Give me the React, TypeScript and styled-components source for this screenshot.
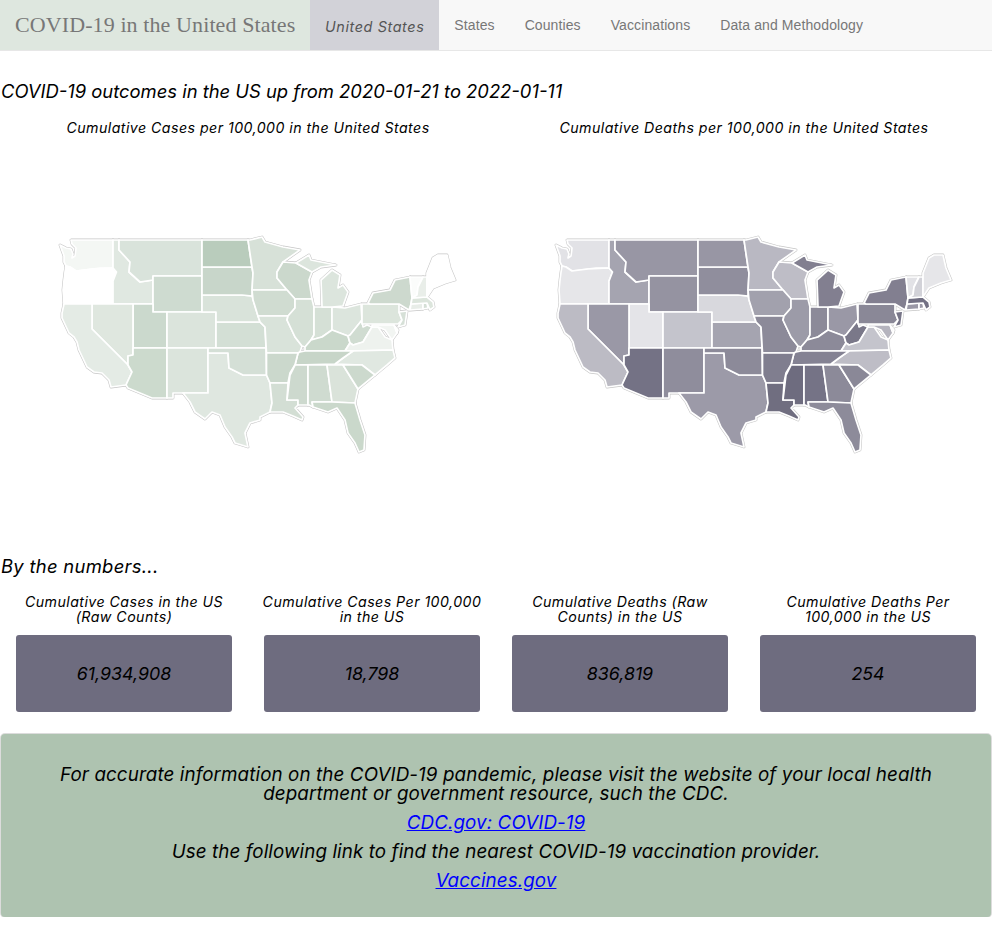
import * as React from 'react'
import styled, { createGlobalStyle } from 'styled-components'

const GlobalStyle = createGlobalStyle`
  html, body {
    margin: 0;
    padding: 0;
    background: #fff;
  }
  body {
    font-family: "Inter", "Liberation Sans", sans-serif;
    color: #000;
  }
`

const Nav = styled.nav`
  display: flex;
  align-items: stretch;
  height: 50px;
  background: #f8f8f8;
  border-bottom: 1px solid #e7e7e7;
`

const Brand = styled.div`
  width: 280px;
  padding: 0 15px;
  display: flex;
  align-items: center;
  background: #dee7df;
  color: #777;
  font-family: "Liberation Serif", serif;
  font-size: 22px;
  letter-spacing: 0.1px;
  white-space: nowrap;
`

const NavItem = styled.a<{ $active?: boolean }>`
  display: flex;
  align-items: center;
  padding: 0 15px;
  white-space: nowrap;
  font-size: ${(p) => (p.$active ? '14.4px' : '14px')};
  letter-spacing: ${(p) => (p.$active ? '0.6px' : '0.1px')};
  color: ${(p) => (p.$active ? '#555' : '#777')};
  background: ${(p) => (p.$active ? '#d2d2d8' : 'transparent')};
  font-family: ${(p) => (p.$active ? '"Inter", sans-serif' : '"Liberation Sans", sans-serif')};
  font-style: ${(p) => (p.$active ? 'italic' : 'normal')};
  padding-top: ${(p) => (p.$active ? '2px' : '0')};
`

const Heading = styled.h3`
  margin: 29px 0 0;
  padding-left: 1px;
  height: 22px;
  line-height: 22px;
  font-size: 18.4px;
  font-weight: 400;
  font-style: italic;
  white-space: nowrap;
`

const MapGrid = styled.div`
  display: grid;
  grid-template-columns: 1fr 1fr;
  margin-top: 16px;
`

const MapPanel = styled.div`
  display: flex;
  flex-direction: column;
  align-items: center;
`

const MapTitle = styled.div`
  height: 20px;
  line-height: 20px;
  font-size: 14.2px;
  letter-spacing: 0.45px;
  font-style: italic;
  white-space: nowrap;
`

const MapSvg = styled.svg`
  display: block;
  width: 496px;
  height: 417px;
`

const SubHeading = styled(Heading)`
  margin-top: 0;
  letter-spacing: 0.3px;
`

const StatGrid = styled.div`
  display: grid;
  grid-template-columns: repeat(4, 1fr);
  margin-top: 17px;
`

const Stat = styled.div`
  padding: 0 16px;
  display: flex;
  flex-direction: column;
`

const StatLabel = styled.div`
  height: 30px;
  margin: 0 -2px 11px;
  line-height: 15px;
  text-align: center;
  font-size: 14.2px;
  letter-spacing: 0.45px;
  font-style: italic;
`

const StatValue = styled.div`
  height: 77px;
  display: flex;
  align-items: center;
  justify-content: center;
  background: #6e6c7f;
  border-radius: 3px;
  font-size: 17.8px;
  font-style: italic;
`

const Notice = styled.div`
  margin: 22px 0 0 1px;
  width: 990px;
  height: 183px;
  box-sizing: border-box;
  padding: 31px 40px 0;
  background: #aec3b0;
  border-radius: 4px;
  box-shadow: 0 0 0 1px #dcdcdc;
  text-align: center;
  font-size: 18.8px;
  letter-spacing: 0.1px;
  font-style: italic;
  line-height: 19px;
`

const NoticeLine = styled.div`
  margin-top: 10px;
`

const NoticeLink = styled.a`
  color: #00f;
  text-decoration: underline;
`

type StateShape = { id: string; d: string; cases: string; deaths: string }

// outlines traced by eye, in page pixels of the left map
const STATES: StateShape[] = [
  { id: 'WA', cases: '#f4f7f4', deaths: '#e2e2e6', d: 'M60,245L66,248L71,249L73,254L72,258L75,256L76,248L72,244L71,240L113,240L113,268L100,268L92,269L76,271L70,267L66,266L64,262L64,256Z' },
  { id: 'OR', cases: '#ffffff', deaths: '#e6e6e9', d: 'M66,266L70,267L76,271L92,269L113,268L116.5,272L113,281L113,304L64,304L63,290L64,280L65,272Z' },
  { id: 'ID', cases: '#e0e8e1', deaths: '#a5a4b0', d: 'M113,240L119,240L119,250L130,262L129,272L140,282L153,280L153,304L113,304L113,281L116.5,272L113,268Z' },
  { id: 'MT', cases: '#d9e3db', deaths: '#9896a4', d: 'M119,240L202,240L202,276L153,276L153,280L140,282L129,272L130,262L119,250Z' },
  { id: 'WY', cases: '#cedbd0', deaths: '#9593a1', d: 'M153,276L202,276L202,312L153,312Z' },
  { id: 'UT', cases: '#cbd9cd', deaths: '#e4e4e8', d: 'M133,304L153,304L153,312L167,312L167,348L133,348Z' },
  { id: 'CO', cases: '#dbe4dc', deaths: '#c4c4cc', d: 'M167,312L216,312L216,348L167,348Z' },
  { id: 'NV', cases: '#dfe7df', deaths: '#9a98a6', d: 'M92,304L133,304L133,355L128,356L128,365L92,329Z' },
  { id: 'CA', cases: '#e4ebe5', deaths: '#bcbbc4', d: 'M64,304L92,304L92,329L128,365L132,372L126,385L111,387L109,380L102,373L94,372L87,367L79,350L77,342L74,337L69,333L62,318L62,313Z' },
  { id: 'AZ', cases: '#ccdacd', deaths: '#747285', d: 'M133,348L167,348L167,398L152,398L128,388L126,385L132,372L128,365L128,356L133,355Z' },
  { id: 'NM', cases: '#dbe4dc', deaths: '#8f8d9c', d: 'M167,348L208,348L208,393L173,393L173,398L167,398Z' },
  { id: 'TX', cases: '#dfe7e0', deaths: '#9c9aa8', d: 'M208,353L228,353L229,368L243,375L250,375L266.5,375L270,383L272,403L270,412L260,417L260,420L250,423L245,433L248,447L235,443L232,437L225,427L220,415L212,412L205,419L195,412L190,402L183,393L208,393Z' },
  { id: 'KS', cases: '#d3dfd5', deaths: '#a5a4b0', d: 'M216,322L260,322L265,327L266,348L216,348Z' },
  { id: 'OK', cases: '#d4dfd6', deaths: '#8c8a99', d: 'M208,348L266,348L266.5,375L250,375L243,375L229,368L228,353L208,353Z' },
  { id: 'NE', cases: '#d9e3da', deaths: '#d8d8dd', d: 'M202,295L242,295L252,296L258,316L260,322L216,322L216,312L202,312Z' },
  { id: 'SD', cases: '#c8d6ca', deaths: '#908e9d', d: 'M202,267L252,267L253,273L252,296L242,295L202,295Z' },
  { id: 'ND', cases: '#b9ccbc', deaths: '#9896a4', d: 'M202,240L248,240L252,267L202,267Z' },
  { id: 'MN', cases: '#d7e1d8', deaths: '#b9b8c2', d: 'M248,240L250,240L262,237L265,242L283,247L300,250L283,262L277,272L277,278L287,290L252,290L253,273L252,267Z' },
  { id: 'WI', cases: '#cbd8cc', deaths: '#bebdc6', d: 'M283,262L296,263L312,272L309,280L312,299L295,299L287,290L277,278L277,272Z' },
  { id: 'IA', cases: '#d0dcd1', deaths: '#a2a1ad', d: 'M252,290L287,290L295,299L295,308L288,316L258,316L253,300Z' },
  { id: 'MO', cases: '#d9e3da', deaths: '#8c8a99', d: 'M258,316L288,316L287,320L295,337L302,346L300,352L298,353L266.5,353L265,327L260,322Z' },
  { id: 'IL', cases: '#d5e0d6', deaths: '#9c9ba8', d: 'M295,299L312,299L314,307L314,335L311,340L305,347L302,346L295,337L287,320L288,316L295,308Z' },
  { id: 'IN', cases: '#d5e0d6', deaths: '#8c8a99', d: 'M314,307L332,307L332,330L322,337L311,340L314,335Z' },
  { id: 'OH', cases: '#dce5dd', deaths: '#9a98a6', d: 'M332,307L345,308L361,304L362,320L350,335L348,336L332,330Z' },
  { id: 'MIL', cases: '#dce5dd', deaths: '#827f90', d: 'M322,307L321,280L332,270L340,275L338,288L343,285L348,292L343,306L332,307Z' },
  { id: 'MIU', cases: '#dce5dd', deaths: '#827f90', d: 'M296,263L309,255L311,260L336,265L321,267L312,272Z' },
  { id: 'KY', cases: '#cad8cb', deaths: '#8c8a99', d: 'M305,351L305,347L311,340L322,337L332,330L348,336L350,343L345,351Z' },
  { id: 'WV', cases: '#d0dcd1', deaths: '#7a7889', d: 'M350,335L362,320L363,327L367,325L372,327L363,342L353,345L350,343L348,336Z' },
  { id: 'VA', cases: '#eef2ee', deaths: '#c4c4cc', d: 'M345,351L350,343L353,345L363,342L372,327L378,327L385,337L392,340L393,350Z' },
  { id: 'NC', cases: '#e0e8e1', deaths: '#bebdc6', d: 'M353,351L393,350L395,358L387,365L375,375L362,365L335,364L343,358Z' },
  { id: 'TN', cases: '#c7d5c8', deaths: '#848293', d: 'M300,352L305,351L353,351L343,358L335,364L295,365L298,353Z' },
  { id: 'AR', cases: '#cbd8cc', deaths: '#807e8f', d: 'M266.5,353L298,353L295,365L290,373L288,383L270,383L266.5,375Z' },
  { id: 'LA', cases: '#d3ded4', deaths: '#706e80', d: 'M270,383L288,383L287,400L298,400L298,405L295,408L303,417L302,420L293,416L283,412L270,412L272,403Z' },
  { id: 'MS', cases: '#cdd9ce', deaths: '#6e6c7f', d: 'M295,365L308,365L308,405L298,405L298,400L287,400L290,375Z' },
  { id: 'AL', cases: '#cfdbd0', deaths: '#757386', d: 'M308,365L327,365L332,402L312,402L313,407L309,405L308,405Z' },
  { id: 'GA', cases: '#dae3da', deaths: '#8c8a99', d: 'M327,365L343,365L358,389L355,403L332,402Z' },
  { id: 'SC', cases: '#ccd9cd', deaths: '#8a8897', d: 'M343,365L362,365L375,375L358,389Z' },
  { id: 'FL', cases: '#cad8cb', deaths: '#8d8b9a', d: 'M312,402L332,402L355,403L360,420L365,435L364,450L359,452L355,443L348,433L345,420L337,408L328,412L313,407Z' },
  { id: 'PA', cases: '#dce5dc', deaths: '#8a8897', d: 'M362,304L399,304L399,312L402,320L398,324L362,324Z' },
  { id: 'NY', cases: '#cdd9ce', deaths: '#827f90', d: 'M368,303L373,293L390,290L395,280L410,277L412,298L411,304L409,310L399,304L370,304Z' },
  { id: 'NJ', cases: '#d6e0d7', deaths: '#777587', d: 'M399,312L407,311L405,325L398,327L402,320Z' },
  { id: 'MD', cases: '#f2f5f2', deaths: '#b5b4be', d: 'M372,325L394,325L397,333L392,340L385,330L378,327L372,327Z' },
  { id: 'DE', cases: '#e3e9e3', deaths: '#b5b4be', d: 'M394,325L398,330L397,333Z' },
  { id: 'CT', cases: '#e8ede8', deaths: '#9a98a6', d: 'M411,304L423,303L423,309L410,310Z' },
  { id: 'RI', cases: '#d5dfd6', deaths: '#9a98a6', d: 'M423,303L427,303L428,308L423,309Z' },
  { id: 'MA', cases: '#dce5dc', deaths: '#727083', d: 'M412,298L427,297L433,302L434,307L430,310L427,303L411,304Z' },
  { id: 'VT', cases: '#fbfcfb', deaths: '#e2e2e6', d: 'M410,277L423,277L418,287L417,295L412,298Z' },
  { id: 'NH', cases: '#e9eee9', deaths: '#d2d2d8', d: 'M423,277L427,277L427,297L412,298L417,295L418,287Z' },
  { id: 'ME', cases: '#ffffff', deaths: '#e6e6e9', d: 'M427,297L427,273L433,258L438,255L447,255L450,268L455,280L445,283L433,288Z' },
]

const StateMap: React.FC<{ kind: 'cases' | 'deaths' }> = ({ kind }) => (
  <MapSvg viewBox="0 138 496 417">
    <g fill="none" stroke="#c6c6c6" strokeWidth="2.8" strokeLinejoin="round">
      {STATES.map((s) => (
        <path key={s.id} d={s.d} />
      ))}
    </g>
    <g stroke="#fff" strokeWidth="1.7" strokeLinejoin="round">
      {STATES.map((s) => (
        <path key={s.id} d={s.d} fill={s[kind]} />
      ))}
    </g>
  </MapSvg>
)

const STATS = [
  { label: 'Cumulative Cases in the US (Raw Counts)', value: '61,934,908' },
  { label: 'Cumulative Cases Per 100,000 in the US', value: '18,798' },
  { label: 'Cumulative Deaths (Raw Counts) in the US', value: '836,819' },
  { label: 'Cumulative Deaths Per 100,000 in the US', value: '254' },
]

const App: React.FC = () => (
  <>
    <GlobalStyle />
    <Nav>
      <Brand>COVID-19 in the United States</Brand>
      <NavItem $active>United States</NavItem>
      <NavItem>States</NavItem>
      <NavItem>Counties</NavItem>
      <NavItem>Vaccinations</NavItem>
      <NavItem>Data and Methodology</NavItem>
    </Nav>
    <Heading>COVID-19 outcomes in the US up from 2020-01-21 to 2022-01-11</Heading>
    <MapGrid>
      <MapPanel>
        <MapTitle>Cumulative Cases per 100,000 in the United States</MapTitle>
        <StateMap kind="cases" />
      </MapPanel>
      <MapPanel>
        <MapTitle>Cumulative Deaths per 100,000 in the United States</MapTitle>
        <StateMap kind="deaths" />
      </MapPanel>
    </MapGrid>
    <SubHeading>By the numbers...</SubHeading>
    <StatGrid>
      {STATS.map((s) => (
        <Stat key={s.label}>
          <StatLabel>{s.label}</StatLabel>
          <StatValue>{s.value}</StatValue>
        </Stat>
      ))}
    </StatGrid>
    <Notice>
      For accurate information on the COVID-19 pandemic, please visit the website of your local health department or government resource, such the CDC.
      <NoticeLine>
        <NoticeLink href="#">CDC.gov: COVID-19</NoticeLink>
      </NoticeLine>
      <NoticeLine>Use the following link to find the nearest COVID-19 vaccination provider.</NoticeLine>
      <NoticeLine>
        <NoticeLink href="#">Vaccines.gov</NoticeLink>
      </NoticeLine>
    </Notice>
  </>
)

export default App
